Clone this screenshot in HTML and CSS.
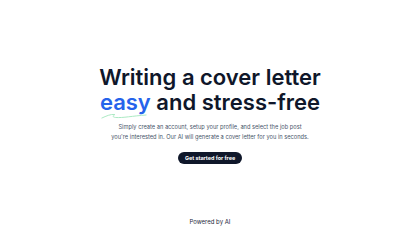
FILE: index.html
```html
<!DOCTYPE html>
<html>
<head>
<meta charset="utf-8">
<link rel="stylesheet" href="styles.css">
</head>
<body>
<main class="page">
  <section class="hero">
    <h1 class="title">Writing a cover letter<br><span class="accent">easy<svg class="squiggle" viewBox="0 0 50 6" preserveAspectRatio="none"><path d="M1 5 C6 3 10 1 15 1.5 C13 3 12 4 16 4.5 C24 5 34 3 49 2" fill="none" stroke="#a7e8c0" stroke-width="1" stroke-linecap="round"/></svg></span> and stress-free</h1>
    <p class="lead">Simply create an account, setup your profile, and select the job post<br>you're interested in. Our AI will generate a cover letter for you in seconds.</p>
    <a class="cta" href="#">Get started for free</a>
  </section>
  <footer class="foot">Powered by AI</footer>
</main>
</body>
</html>
```
FILE: styles.css
```css
html, body {
  margin: 0;
  padding: 0;
  background: #ffffff;
}
.page {
  width: 420px;
  height: 236px;
  display: flex;
  flex-direction: column;
  align-items: center;
  font-family: Inter, "Liberation Sans", sans-serif;
  color: #0f172a;
}
.hero {
  display: flex;
  flex-direction: column;
  align-items: center;
  padding-top: 65px;
}
.title {
  margin: 0;
  font-size: 22px;
  line-height: 25px;
  font-weight: 600;
  text-align: center;
  letter-spacing: 0;
  color: #0f172a;
}
.accent {
  position: relative;
  color: #2563eb;
}
.squiggle {
  position: absolute;
  left: 1px;
  bottom: -4px;
  width: 46px;
  height: 6px;
}
.lead {
  margin: 7px 0 0;
  font-size: 5.7px;
  line-height: 10px;
  text-align: center;
  color: #475569;
}
.cta {
  margin-top: 10px;
  display: inline-block;
  background: #0f172a;
  color: #ffffff;
  font-size: 5.4px;
  font-weight: 700;
  padding: 3px 7px;
  line-height: 6px;
  border-radius: 6px;
  text-decoration: none;
}
.foot {
  margin-top: auto;
  margin-bottom: 11px;
  font-size: 6px;
  color: #1e293b;
}
```
